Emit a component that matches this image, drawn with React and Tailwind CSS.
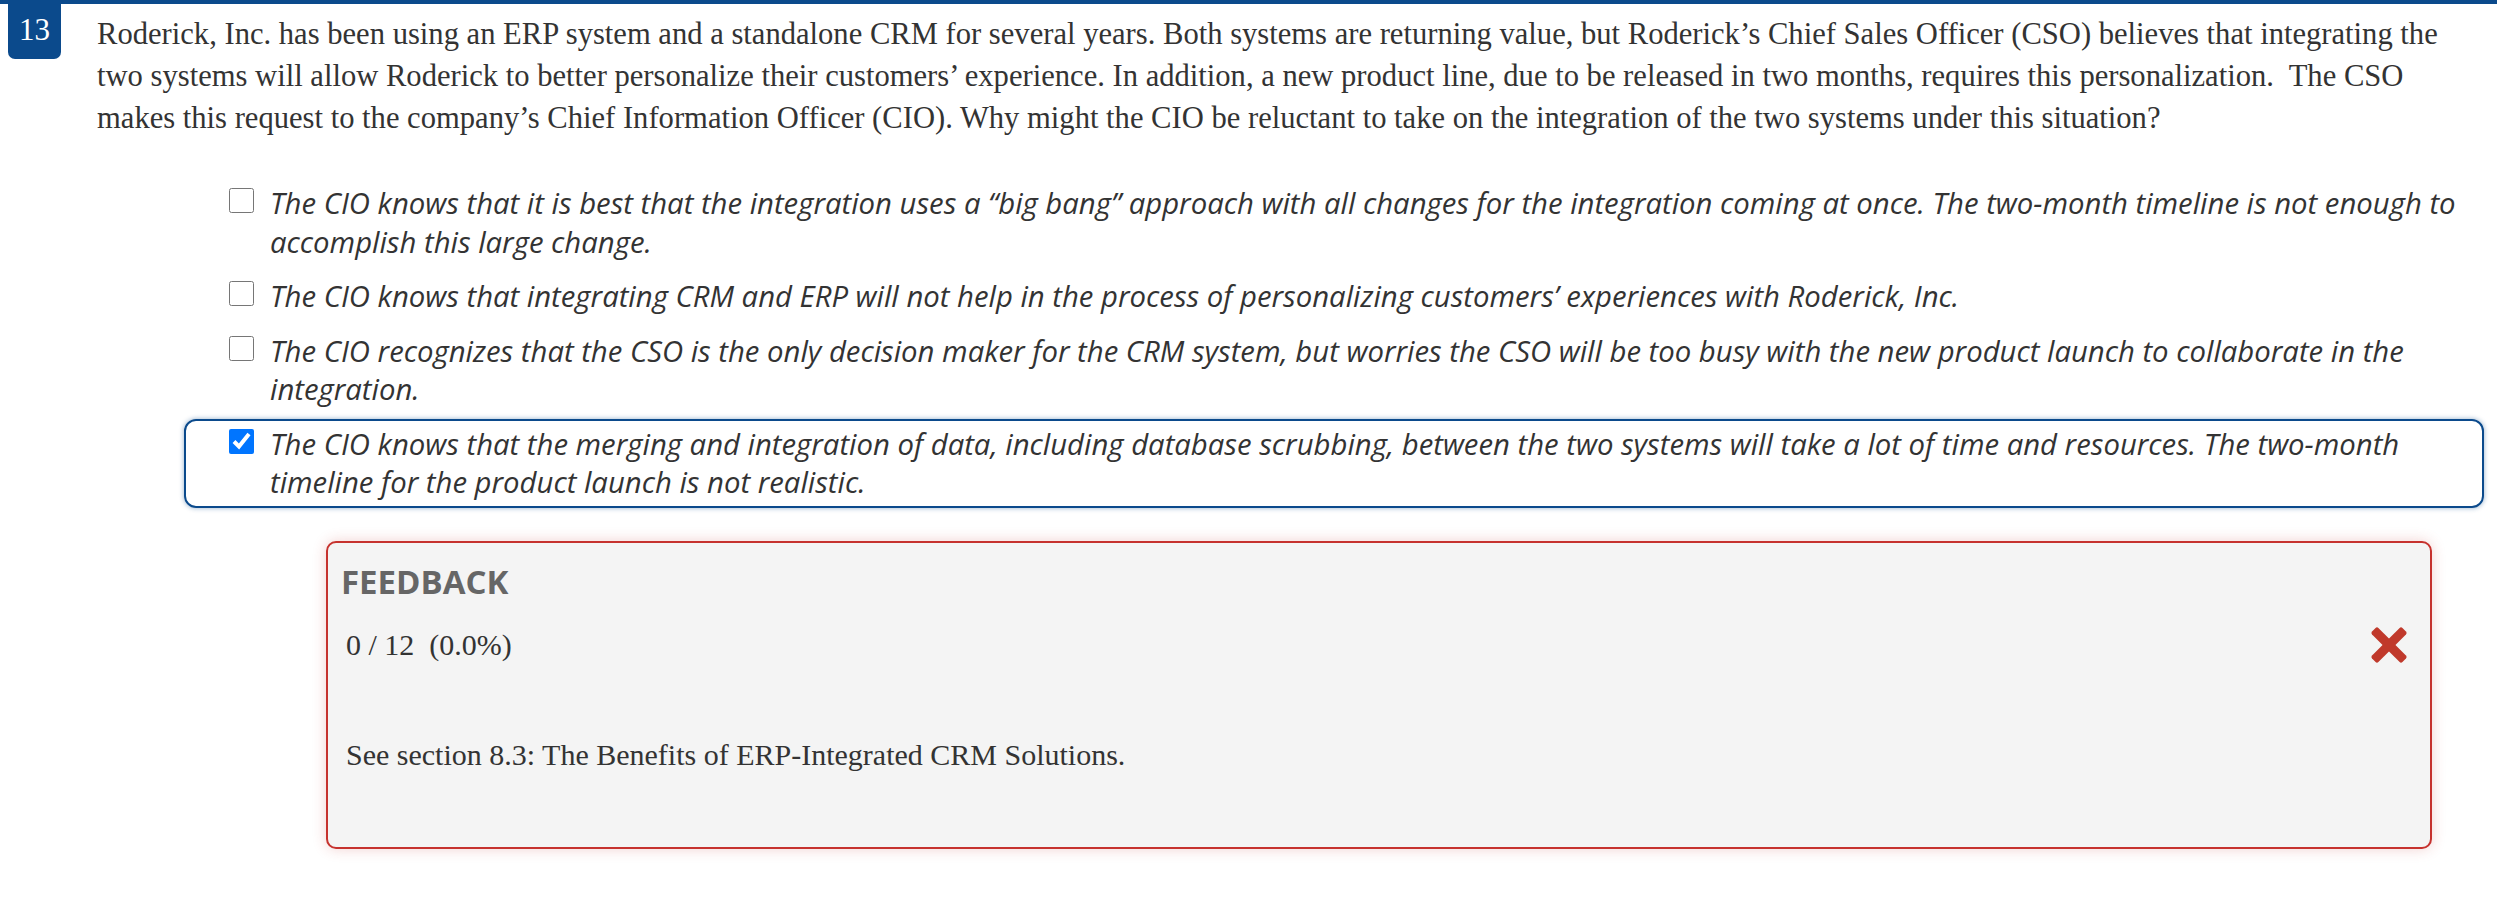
const serif = { fontFamily: '"Liberation Serif", serif' };

const questionLines = [
  "Roderick, Inc. has been using an ERP system and a standalone CRM for several years. Both systems are returning value, but Roderick’s Chief Sales Officer (CSO) believes that integrating the",
  "two systems will allow Roderick to better personalize their customers’ experience. In addition, a new product line, due to be released in two months, requires this personalization.\u00a0 The CSO",
  "makes this request to the company’s Chief Information Officer (CIO). Why might the CIO be reluctant to take on the integration of the two systems under this situation?",
];

const options = [
  {
    lines: [
      "The CIO knows that it is best that the integration uses a “big bang” approach with all changes for the integration coming at once. The two-month timeline is not enough to",
      "accomplish this large change.",
    ],
  },
  {
    lines: [
      "The CIO knows that integrating CRM and ERP will not help in the process of personalizing customers’ experiences with Roderick, Inc.",
    ],
  },
  {
    lines: [
      "The CIO recognizes that the CSO is the only decision maker for the CRM system, but worries the CSO will be too busy with the new product launch to collaborate in the",
      "integration.",
    ],
  },
  {
    lines: [
      "The CIO knows that the merging and integration of data, including database scrubbing, between the two systems will take a lot of time and resources. The two-month",
      "timeline for the product launch is not realistic.",
    ],
    checked: true,
  },
];

function Option({ lines, checked }) {
  return (
    <label
      className={
        "flex items-start gap-[16px] w-[2300px] pl-[43px] py-[4px] rounded-[12px] border-2 " +
        (checked
          ? "border-[#0b4a8c] shadow-[0_0_5px_rgba(11,74,140,0.45)]"
          : "border-transparent")
      }
    >
      <input
        type="checkbox"
        defaultChecked={checked}
        className="m-0 mt-[4px] w-[25px] h-[25px] shrink-0"
      />
      <span
        className="italic text-[29.3px] leading-[38.5px] text-[#333] whitespace-nowrap"
        style={{ fontFamily: '"Open Sans", sans-serif' }}
      >
        {lines.map((l, i) => (
          <span key={i} className="block">
            {l}
          </span>
        ))}
      </span>
    </label>
  );
}

export default function App() {
  return (
    <div className="min-h-screen bg-white">
      <div className="h-[4px] bg-[#0b4a8c]" />
      <div className="flex items-start pl-[8px]">
        <div
          className="w-[53px] h-[55px] shrink-0 bg-[#0b4a8c] rounded-b-[7px] flex justify-center pt-[8px] text-white text-[31px] leading-[36px]"
          style={serif}
        >
          13
        </div>
        <p
          className="ml-[36px] pt-[9px] text-[30.6px] leading-[42px] text-[#333] whitespace-nowrap"
          style={serif}
        >
          {questionLines.map((l, i) => (
            <span key={i} className="block">
              {l}
            </span>
          ))}
        </p>
      </div>

      <div className="ml-[184px] mt-[39px] flex flex-col gap-[4px]">
        {options.map((o, i) => (
          <Option key={i} {...o} />
        ))}
      </div>

      <div className="ml-[326px] mt-[33px] w-[2106px] h-[308px] bg-[#f4f4f4] border-2 border-[#c6322e] rounded-[10px] shadow-[0_0_14px_rgba(198,50,46,0.22)] pt-[19px] pl-[13px] pr-[20px]">
        <div
          className="font-bold text-[33px] leading-[40px] text-[#666]"
          style={{ fontFamily: '"Open Sans", sans-serif' }}
        >
          FEEDBACK
        </div>
        <div className="mt-[22px] pl-[5px] flex items-center justify-between">
          <span className="text-[30px] leading-[42px] text-[#333] whitespace-pre" style={serif}>
            {"0 / 12  (0.0%)"}
          </span>
          <svg width="40" height="40" viewBox="0 0 40 40" className="mr-[1px]">
            <g fill="#c0392b">
              <rect x="15.5" y="-1.5" width="9" height="43" rx="2" transform="rotate(45 20 20)" />
              <rect x="15.5" y="-1.5" width="9" height="43" rx="2" transform="rotate(-45 20 20)" />
            </g>
          </svg>
        </div>
        <p className="mt-[68px] pl-[5px] text-[30px] leading-[42px] text-[#333]" style={serif}>
          See section 8.3: The Benefits of ERP-Integrated CRM Solutions.
        </p>
      </div>
    </div>
  );
}
